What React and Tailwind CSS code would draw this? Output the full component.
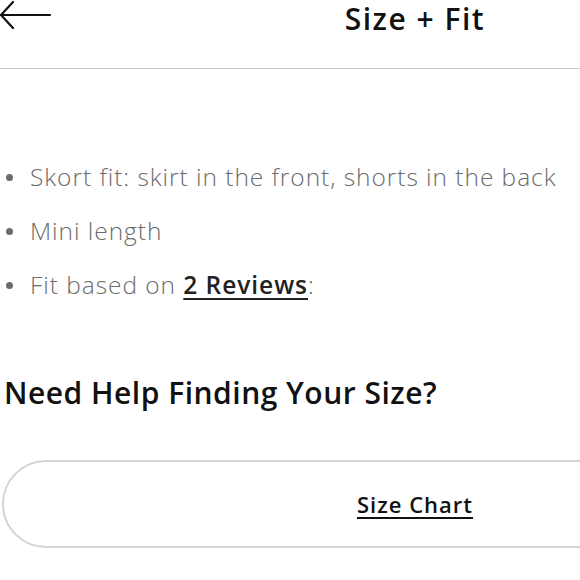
export default function App() {
  const bullets = [
    { text: "Skort fit: skirt in the front, shorts in the back" },
    { text: "Mini length" },
  ];

  return (
    <div className="w-[580px] h-[580px] overflow-hidden bg-white" style={{ fontFamily: "'Open Sans', 'Noto Sans', sans-serif" }}>
      <div className="w-[830px]">
        {/* Header */}
        <div className="relative h-[69px] border-b border-[#c9c9c9] flex justify-center items-start pt-[3px]">
          <button type="button" className="absolute left-0 top-0 h-[30px] w-[52px]">
            <svg width="52" height="32" viewBox="0 0 52 32" fill="none" stroke="#111" strokeWidth="2.2" strokeLinecap="round">
              <path d="M1 15 H50" />
              <path d="M13 2 L1 15 L13 28" />
            </svg>
          </button>
          <h1 className="text-[30px] leading-[32px] font-semibold tracking-[1.5px] text-[#111]">Size + Fit</h1>
        </div>

        {/* Fit details */}
        <ul className="mt-[81px] pl-[6px]">
          {bullets.map((b) => (
            <li key={b.text} className="flex items-center h-[54px] text-[24.5px] font-light tracking-[0.95px] text-[#6b6b6b]">
              <span className="w-[7px] h-[7px] rounded-full bg-[#6b6b6b] mr-[17px]" />
              {b.text}
            </li>
          ))}
          <li className="flex items-center h-[54px] text-[24.5px] font-light tracking-[0.95px] text-[#6b6b6b]">
            <span className="w-[7px] h-[7px] rounded-full bg-[#6b6b6b] mr-[17px]" />
            Fit based on&nbsp;
            <a href="#" className="font-semibold text-[#222] underline decoration-2 underline-offset-4">2 Reviews</a>
            :
          </li>
        </ul>

        <h2 className="mt-[61px] pl-[4px] text-[30px] leading-[40px] font-semibold tracking-[0.5px] text-[#111]">Need Help Finding Your Size?</h2>

        <button
          type="button"
          className="mt-[47px] ml-[2px] w-[826px] h-[88px] rounded-full border-2 border-[#d4d4d4] flex items-center justify-center"
        >
          <span className="text-[22px] font-semibold tracking-[1px] text-[#111] underline decoration-2 underline-offset-4">Size Chart</span>
        </button>
      </div>
    </div>
  );
}
